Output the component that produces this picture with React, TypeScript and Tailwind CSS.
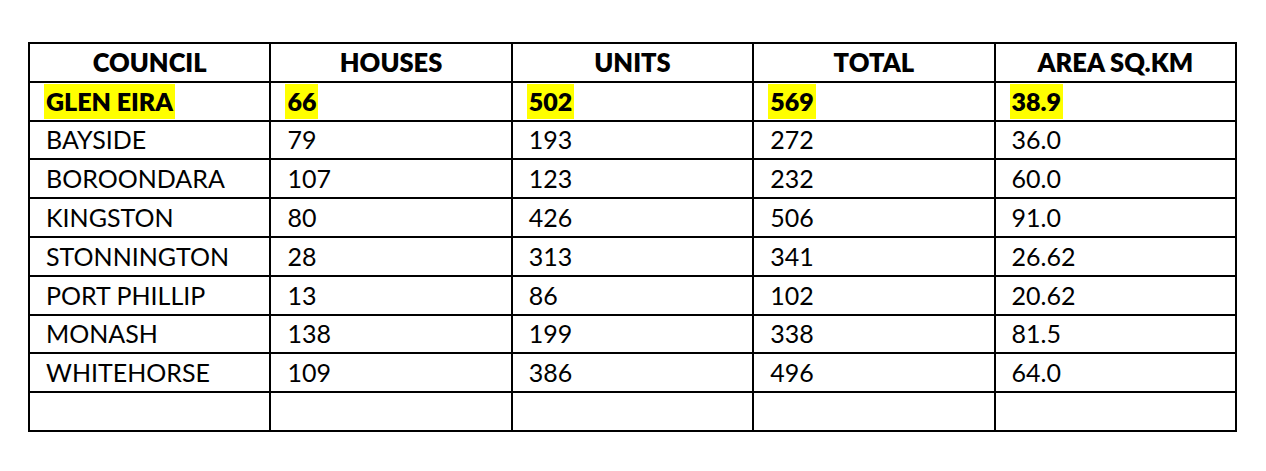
import React from "react";

type TRow = { council: string; houses: string; units: string; total: string; area: string };

const rows: TRow[] = [
    { council: "BAYSIDE", houses: "79", units: "193", total: "272", area: "36.0" },
    { council: "BOROONDARA", houses: "107", units: "123", total: "232", area: "60.0" },
    { council: "KINGSTON", houses: "80", units: "426", total: "506", area: "91.0" },
    { council: "STONNINGTON", houses: "28", units: "313", total: "341", area: "26.62" },
    { council: "PORT PHILLIP", houses: "13", units: "86", total: "102", area: "20.62" },
    { council: "MONASH", houses: "138", units: "199", total: "338", area: "81.5" },
    { council: "WHITEHORSE", houses: "109", units: "386", total: "496", area: "64.0" },
];

const headers = ["COUNCIL", "HOUSES", "UNITS", "TOTAL", "AREA SQ.KM"];
const highlight = ["GLEN EIRA", "66", "502", "569", "38.9"];

export default function App() {
    return (
        <div className="w-[1266px] h-[471px] bg-white pt-[42px] pl-[28px]" style={{ fontFamily: "Lato, 'Noto Sans', sans-serif" }}>
            <table className="border-collapse border-2 border-black w-[1209px] table-fixed text-[25px] text-black">
                <thead>
                    <tr className="h-[38.8px]">
                        {headers.map(h => (
                            <th key={h} className="border-2 border-black text-center font-extrabold text-[25.5px] p-0 leading-none">{h}</th>
                        ))}
                    </tr>
                </thead>
                <tbody>
                    <tr className="h-[38.8px]">
                        {highlight.map((v, i) => (
                            <td key={i} className="border-2 border-black font-extrabold p-0 pl-[14px] leading-none">
                                <span className="inline-block bg-[#ffff00] px-[2px] leading-[35px] align-middle">{v}</span>
                            </td>
                        ))}
                    </tr>
                    {rows.map(r => (
                        <tr key={r.council} className="h-[38.8px]">
                            <td className="border-2 border-black p-0 pl-[16px] leading-none">{r.council}</td>
                            <td className="border-2 border-black p-0 pl-[16px] leading-none">{r.houses}</td>
                            <td className="border-2 border-black p-0 pl-[16px] leading-none">{r.units}</td>
                            <td className="border-2 border-black p-0 pl-[16px] leading-none">{r.total}</td>
                            <td className="border-2 border-black p-0 pl-[16px] leading-none">{r.area}</td>
                        </tr>
                    ))}
                    <tr className="h-[38.8px]">
                        {[0, 1, 2, 3, 4].map(i => (
                            <td key={i} className="border-2 border-black p-0"></td>
                        ))}
                    </tr>
                </tbody>
            </table>
        </div>
    );
}
